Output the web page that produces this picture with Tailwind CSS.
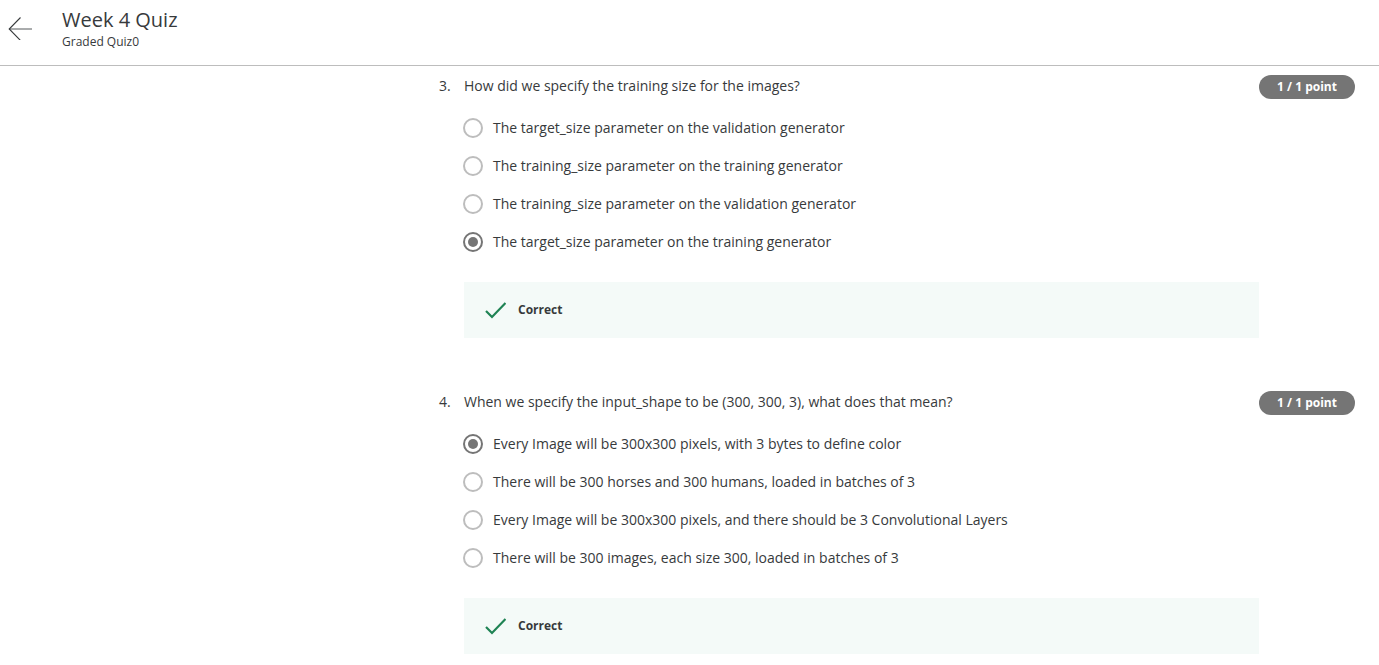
<!DOCTYPE html>
<html lang="en">
<head>
<meta charset="utf-8">
<meta name="viewport" content="width=device-width, initial-scale=1">
<title>Week 4 Quiz</title>
<script src="https://cdn.jsdelivr.net/npm/@tailwindcss/browser@4"></script>
</head>
<body class="bg-white font-['Open_Sans',sans-serif] text-sm text-[#373a3c]">
<header class="flex h-[66px] items-start border-b border-[#bdbdbd] px-2 pt-2">
  <button type="button" aria-label="Back" class="mt-2 mr-[30px] size-6 shrink-0">
    <svg viewBox="0 0 24 24" class="size-6" fill="none" stroke="#373a3c"><path d="M24 13H1" stroke-width="1" stroke="#55585a"/><path d="M12.5 1.5L1.2 13l11.3 11.5" stroke-width="1.1"/></svg>
  </button>
  <div>
    <h1 class="text-xl leading-6">Week 4 Quiz</h1>
    <p class="text-xs leading-5">Graded Quiz0</p>
  </div>
</header>
<main class="flex flex-col gap-[52px] pt-2 pr-6 pl-[439px]">
  <section class="grid grid-cols-[25px_1fr_96px]">
    <span class="leading-6">3.</span>
    <fieldset class="min-w-0">
      <legend class="leading-6">How did we specify the training size for the images?</legend>
      <div class="mt-[11px]">
        <label class="flex h-[38px] items-center gap-[10px]"><input type="radio" name="q3" class="-ml-px grid size-5 appearance-none place-content-center rounded-full border-2 border-[#bdbdbd] before:size-[10px] before:rounded-full checked:border-[#757575] checked:before:bg-[#757575]">The target_size parameter on the validation generator</label>
        <label class="flex h-[38px] items-center gap-[10px]"><input type="radio" name="q3" class="-ml-px grid size-5 appearance-none place-content-center rounded-full border-2 border-[#bdbdbd] before:size-[10px] before:rounded-full checked:border-[#757575] checked:before:bg-[#757575]">The training_size parameter on the training generator</label>
        <label class="flex h-[38px] items-center gap-[10px]"><input type="radio" name="q3" class="-ml-px grid size-5 appearance-none place-content-center rounded-full border-2 border-[#bdbdbd] before:size-[10px] before:rounded-full checked:border-[#757575] checked:before:bg-[#757575]">The training_size parameter on the validation generator</label>
        <label class="flex h-[38px] items-center gap-[10px]"><input type="radio" name="q3" checked class="-ml-px grid size-5 appearance-none place-content-center rounded-full border-2 border-[#bdbdbd] before:size-[10px] before:rounded-full checked:border-[#757575] checked:before:bg-[#757575]">The target_size parameter on the training generator</label>
      </div>
      <div class="mt-[21px] flex h-14 items-center gap-3 bg-[#f4faf8] px-5 text-xs font-bold text-[#373a3c]">
        <svg viewBox="0 0 22 22" class="size-[22px]" fill="none" stroke="#1f8354" stroke-width="2.2"><path d="M2 12l6 6L21.5 4"/></svg>Correct
      </div>
    </fieldset>
    <span class="mt-px flex h-6 items-center justify-center rounded-full bg-[#757575] text-xs font-bold text-white">1 / 1 point</span>
  </section>
  <section class="grid grid-cols-[25px_1fr_96px]">
    <span class="leading-6">4.</span>
    <fieldset class="min-w-0">
      <legend class="leading-6">When we specify the input_shape to be (300, 300, 3), what does that mean?</legend>
      <div class="mt-[11px]">
        <label class="flex h-[38px] items-center gap-[10px]"><input type="radio" name="q4" checked class="-ml-px grid size-5 appearance-none place-content-center rounded-full border-2 border-[#bdbdbd] before:size-[10px] before:rounded-full checked:border-[#757575] checked:before:bg-[#757575]">Every Image will be 300x300 pixels, with 3 bytes to define color</label>
        <label class="flex h-[38px] items-center gap-[10px]"><input type="radio" name="q4" class="-ml-px grid size-5 appearance-none place-content-center rounded-full border-2 border-[#bdbdbd] before:size-[10px] before:rounded-full checked:border-[#757575] checked:before:bg-[#757575]">There will be 300 horses and 300 humans, loaded in batches of 3</label>
        <label class="flex h-[38px] items-center gap-[10px]"><input type="radio" name="q4" class="-ml-px grid size-5 appearance-none place-content-center rounded-full border-2 border-[#bdbdbd] before:size-[10px] before:rounded-full checked:border-[#757575] checked:before:bg-[#757575]">Every Image will be 300x300 pixels, and there should be 3 Convolutional Layers</label>
        <label class="flex h-[38px] items-center gap-[10px]"><input type="radio" name="q4" class="-ml-px grid size-5 appearance-none place-content-center rounded-full border-2 border-[#bdbdbd] before:size-[10px] before:rounded-full checked:border-[#757575] checked:before:bg-[#757575]">There will be 300 images, each size 300, loaded in batches of 3</label>
      </div>
      <div class="mt-[21px] flex h-14 items-center gap-3 bg-[#f4faf8] px-5 text-xs font-bold text-[#373a3c]">
        <svg viewBox="0 0 22 22" class="size-[22px]" fill="none" stroke="#1f8354" stroke-width="2.2"><path d="M2 12l6 6L21.5 4"/></svg>Correct
      </div>
    </fieldset>
    <span class="mt-px flex h-6 items-center justify-center rounded-full bg-[#757575] text-xs font-bold text-white">1 / 1 point</span>
  </section>
</main>
</body>
</html>
